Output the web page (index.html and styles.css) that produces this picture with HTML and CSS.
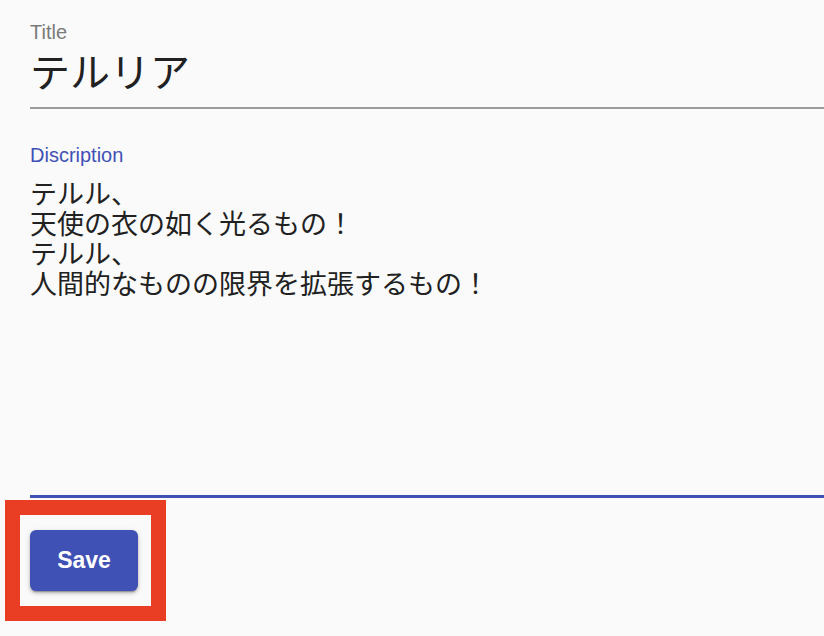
FILE: index.html
```html
<!DOCTYPE html>
<html lang="ja">
<head>
<meta charset="utf-8">
<title>Edit</title>
<link rel="stylesheet" href="styles.css">
</head>
<body>
<form class="form">
  <div class="field field-title">
    <label class="label">Title</label>
    <div class="title-value">テルリア</div>
  </div>
  <div class="field field-desc">
    <label class="label label-focused">Discription</label>
    <div class="desc-value">テルル、
天使の衣の如く光るもの！
テルル、
人間的なものの限界を拡張するもの！</div>
  </div>
  <div class="actions">
    <button type="button" class="save">Save</button>
    <span class="highlight"></span>
  </div>
</form>
</body>
</html>
```

FILE: styles.css
```css
html, body {
  margin: 0;
  padding: 0;
  background: #fafafa;
}
body {
  font-family: "Liberation Sans", Arial, "Noto Sans CJK JP", sans-serif;
  width: 824px;
  height: 636px;
  overflow: hidden;
}
.form {
  padding-left: 30px;
  padding-top: 21px;
}
.label {
  display: block;
  font-size: 20px;
  line-height: 23px;
  color: #7a7a7a;
}
.label-focused {
  color: #3f51b5;
}
.field-title {
  border-bottom: 2px solid #9c9c9c;
  padding-bottom: 11px;
}
.title-value {
  font-family: "Noto Sans CJK JP", sans-serif;
  font-size: 40px;
  line-height: 52px;
  color: #212121;
}
.field-desc {
  margin-top: 35px;
  border-bottom: 3px solid #3f51b5;
  height: 354px;
  box-sizing: border-box;
}
.desc-value {
  margin-top: 11px;
  font-family: "Noto Sans CJK JP", sans-serif;
  font-size: 27px;
  line-height: 30px;
  color: #212121;
  white-space: pre-line;
}
.actions {
  position: relative;
  padding-top: 32px;
}
.save {
  display: block;
  width: 108px;
  height: 61px;
  border: none;
  border-radius: 6px;
  background: #4051b5;
  color: #fff;
  font-family: "Liberation Sans", Arial, sans-serif;
  font-weight: bold;
  font-size: 23px;
  box-shadow: 0 3px 1px -2px rgba(0,0,0,.2), 0 2px 3px 0 rgba(0,0,0,.2), 0 2px 6px 0 rgba(0,0,0,.14);
  cursor: pointer;
}
.highlight {
  position: absolute;
  left: -25px;
  top: 2px;
  width: 161px;
  height: 121px;
  box-sizing: border-box;
  border: 15px solid #e93e24;
  pointer-events: none;
}
```
